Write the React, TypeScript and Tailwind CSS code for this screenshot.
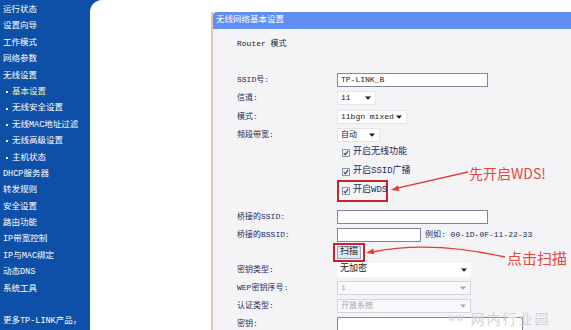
import React from "react";

const FONT = { fontFamily: '"Liberation Mono", "Noto Sans CJK SC", monospace' };

type NavItem = { t: string; sub?: boolean; active?: boolean };

const nav: NavItem[] = [
  { t: "运行状态" },
  { t: "设置向导" },
  { t: "工作模式" },
  { t: "网络参数" },
  { t: "无线设置" },
  { t: "基本设置", sub: true, active: true },
  { t: "无线安全设置", sub: true },
  { t: "无线MAC地址过滤", sub: true },
  { t: "无线高级设置", sub: true },
  { t: "主机状态", sub: true },
  { t: "DHCP服务器" },
  { t: "转发规则" },
  { t: "安全设置" },
  { t: "路由功能" },
  { t: "IP带宽控制" },
  { t: "IP与MAC绑定" },
  { t: "动态DNS" },
  { t: "系统工具" },
  { t: "" },
  { t: "更多TP-LINK产品，" },
];

function Caret({ gray }: { gray?: boolean }) {
  return (
    <svg width="6" height="4" viewBox="0 0 6 4" className="shrink-0">
      <path d="M0 0.5h6L3 3.8z" fill={gray ? "#a8a8b0" : "#1a1a1a"} />
    </svg>
  );
}

function Select({ value, w, disabled }: { value: string; w: string; disabled?: boolean }) {
  return (
    <div
      className={`flex h-[14px] items-center justify-between border pl-[3px] pr-[4px] ${w} ${
        disabled
          ? "border-[#d4d4dc] bg-[#f9f9fb] text-[#a4a4aa]"
          : "border-[#e4e4ea] bg-white text-[#1a1a1a]"
      }`}
    >
      <span>{value}</span>
      <Caret gray={disabled} />
    </div>
  );
}

function Input({ value, w }: { value?: string; w: string }) {
  return (
    <div className={`flex h-[14px] items-center border border-[#7d8798] bg-white pl-[3px] text-[#1a1a1a] ${w}`}>
      {value}
    </div>
  );
}

function Check({ label }: { label: string }) {
  return (
    <div className="flex items-center gap-[3px] whitespace-nowrap pl-[5px] text-[9px] text-[#1e2a5a]">
      <span className="grid h-[8px] w-[8px] shrink-0 place-items-center border border-[#8b98ab] bg-[#e9eef8]">
        <svg width="6" height="6" viewBox="0 0 6 6">
          <path d="M0.8 3.2l1.5 1.6L5.2 0.9" stroke="#3a4150" strokeWidth="1.1" fill="none" />
        </svg>
      </span>
      {label}
    </div>
  );
}

function Row({ label, h, children }: { label?: string; h: string; children?: React.ReactNode }) {
  return (
    <div className={`flex shrink-0 items-center ${h}`}>
      <div className="w-[100px] shrink-0 whitespace-nowrap text-[8px] text-[#1e2a5a]">{label}</div>
      <div className="flex items-center gap-[4px]">{children}</div>
    </div>
  );
}

export default function App() {
  return (
    <div className="relative flex h-[330px] w-[571px] overflow-hidden bg-[#0e50a7]" style={FONT}>
      <aside className="w-[90px] shrink-0 pt-[2px] text-[8.5px] leading-[16.4px] text-white">
        {nav.map((n, i) => (
          <div key={i} className={`flex h-[16.4px] items-center whitespace-nowrap ${n.sub ? "pl-[6px]" : "pl-[3px]"}`}>
            {n.sub && <span className="mr-[4px] inline-block h-[2px] w-[2px] bg-white" />}
            <span className={n.active ? "text-[#f3f1a6]" : ""}>{n.t}</span>
          </div>
        ))}
      </aside>

      <main className="flex flex-1 rounded-tl-[12px] bg-white pl-[121px] pt-[12px]">
        <section className="flex-1 overflow-hidden border-l-2 border-[#dcc5b2] bg-[#f4f4f7]">
          <div className="flex h-[17px] items-center rounded-tl-[4px] bg-[#5e8ff1] pl-[3px] text-[8.5px] text-white">
            无线网络基本设置
          </div>
          <div className="pl-[24px]">
            <div className="mt-[8px] flex h-[14px] items-center text-[8px] text-[#1a1a1a]">Router 模式</div>
            <div className="mt-[20px] text-[8px]">
              <Row label="SSID号:" h="h-[18px]">
                <Input value="TP-LINK_B" w="w-[151px]" />
              </Row>
              <Row label="信道:" h="h-[18px]">
                <Select value="11" w="w-[39px]" />
              </Row>
              <Row label="模式:" h="h-[19px]">
                <Select value="11bgn mixed" w="w-[70px]" />
              </Row>
              <Row label="频段带宽:" h="h-[17px]">
                <Select value="自动" w="w-[43px]" />
              </Row>
              <Row h="h-[20px]">
                <Check label="开启无线功能" />
              </Row>
              <Row h="h-[17px]">
                <Check label="开启SSID广播" />
              </Row>
              <Row h="h-[22px]">
                <div className="flex h-[22px] w-[51px] items-center border-2 border-[#c8232b]">
                  <div className="-ml-[2px]">
                    <Check label="开启WDS" />
                  </div>
                </div>
              </Row>
              <div className="h-[6px]" />
              <Row label="桥接的SSID:" h="h-[18px]">
                <Input w="w-[151px]" />
              </Row>
              <Row label="桥接的BSSID:" h="h-[18px]">
                <Input w="w-[84px]" />
                <span className="whitespace-nowrap text-[8px] text-[#1e2a5a]">例如: 00-1D-0F-11-22-33</span>
              </Row>
              <Row h="h-[17px]">
                <div className="-ml-[4px] flex h-[19px] w-[32px] items-center justify-center border-2 border-[#c8232b]">
                  <span className="flex h-[13px] items-center border border-[#9aa6bb] bg-[#dfe7f6] px-[2px] text-[9px] text-[#1a1a1a]">
                    扫描
                  </span>
                </div>
              </Row>
              <Row label="密钥类型:" h="h-[18px]">
                <div className="flex h-[14px] w-[134px] items-center justify-between bg-white pl-[3px] pr-[4px] text-[9px] text-[#1a1a1a]">
                  <span>无加密</span>
                  <Caret />
                </div>
              </Row>
              <Row label="WEP密钥序号:" h="h-[18px]">
                <Select value="1" w="w-[134px]" disabled />
              </Row>
              <Row label="认证类型:" h="h-[18px]">
                <Select value="开放系统" w="w-[134px]" disabled />
              </Row>
              <Row label="密钥:" h="h-[18px]">
                <div className="h-[14px] w-[186px] border border-[#7d8798] bg-white" />
              </Row>
            </div>
          </div>
        </section>
      </main>

      {/* annotations */}
      <svg className="pointer-events-none absolute inset-0" width="571" height="330" viewBox="0 0 571 330">
        <line x1="468" y1="172" x2="396" y2="188.4" stroke="#e23b33" strokeWidth="1.3" />
        <polygon points="391,190 399.5,191.1 398.1,185.3" fill="#e23b33" />
        <path d="M505 257 Q430 240 372 252" stroke="#e23b33" strokeWidth="1.3" fill="none" />
        <polygon points="366,253 374.4,254.3 373.2,248.5" fill="#e23b33" />
      </svg>
      <div
        className="absolute left-[469px] top-[164px] text-[14px] leading-[18px] text-[#e5463d]"
        style={{ fontFamily: '"Noto Sans CJK SC", sans-serif' }}
      >
        先开启WDS!
      </div>
      <div
        className="absolute left-[507px] top-[248px] text-[15px] leading-[20px] text-[#e5463d]"
        style={{ fontFamily: '"Noto Sans CJK SC", sans-serif' }}
      >
        点击扫描
      </div>
      <div
        className="absolute left-[448px] top-[309px] whitespace-nowrap text-[14px] leading-[18px] tracking-[2px] text-[#d2d2d6]"
        style={{ fontFamily: '"Noto Sans CJK SC", sans-serif' }}
      >
        ʷʷ 网内行业园
      </div>
    </div>
  );
}
